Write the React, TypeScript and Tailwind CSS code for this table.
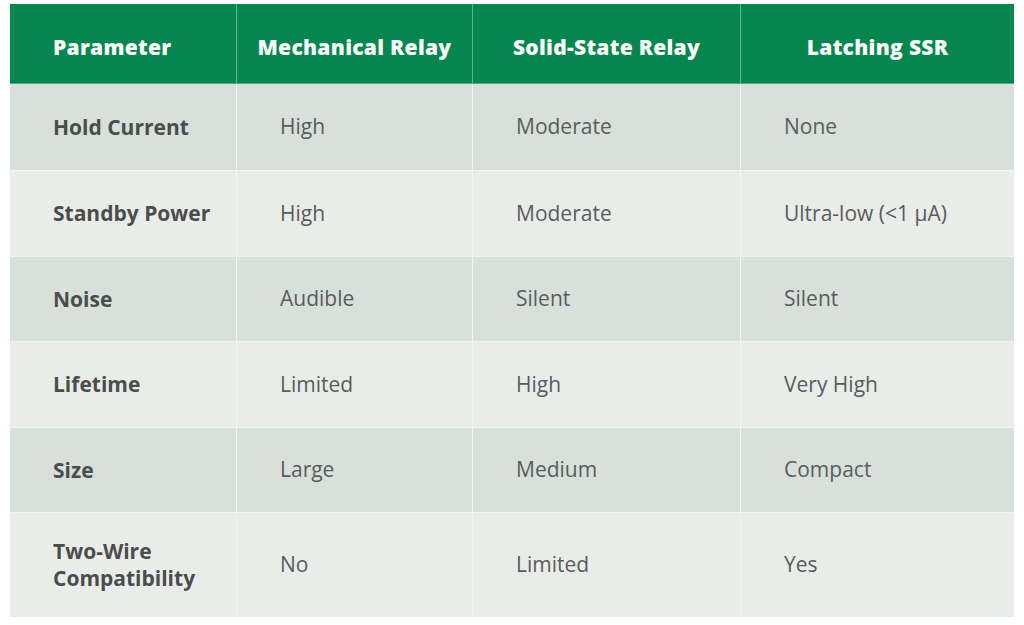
import React from "react";

const headers = ["Parameter", "Mechanical Relay", "Solid-State Relay", "Latching SSR"];
const rows: { label: React.ReactNode; vals: string[]; h: string }[] = [
  { label: "Hold Current", vals: ["High", "Moderate", "None"], h: "h-[86px]" },
  { label: "Standby Power", vals: ["High", "Moderate", "Ultra-low (<1 µA)"], h: "h-[86px]" },
  { label: "Noise", vals: ["Audible", "Silent", "Silent"], h: "h-[85px]" },
  { label: "Lifetime", vals: ["Limited", "High", "Very High"], h: "h-[86px]" },
  { label: "Size", vals: ["Large", "Medium", "Compact"], h: "h-[85px]" },
  {
    label: (
      <>
        Two-Wire
        <br />
        Compatibility
      </>
    ),
    vals: ["No", "Limited", "Yes"],
    h: "h-[105px]",
  },
];

export default function App() {
  return (
    <div className="w-[1024px] h-[625px] bg-white pt-[4px] pl-[10px]" style={{ fontFamily: '"Open Sans", sans-serif' }}>
      <div className="w-[1004px] grid grid-cols-[227px_236px_268px_273px]">
        {headers.map((h, i) => (
          <div
            key={h}
            className={`h-[80px] bg-[#05864f] flex items-center pt-[8px] text-white text-[21px] font-extrabold tracking-[0.3px] border-b border-[#4fae80] ${
              i === 0 ? "pl-[43px]" : "justify-center"
            } ${i < 3 ? "border-r border-r-[#5fb48a]" : ""}`}
          >
            {h}
          </div>
        ))}
        {rows.map((r, ri) => {
          const bg = ri % 2 === 0 ? "bg-[#d7e0da]" : "bg-[#e9edea]";
          const top = ri === 0 ? "" : "border-t border-t-[#f2f5f2]";
          return (
            <React.Fragment key={ri}>
              <div
                className={`${r.h} ${bg} ${top} border-r border-r-[#f2f5f2] flex items-center pl-[43px] text-[21px] font-bold leading-[27px] text-[#4a4d4b]`}
              >
                <span>{r.label}</span>
              </div>
              {r.vals.map((v, vi) => (
                <div
                  key={vi}
                  className={`${r.h} ${bg} ${top} ${vi < 2 ? "border-r border-r-[#f2f5f2]" : ""} flex items-center pl-[43px] text-[21px] text-[#5a5c5b]`}
                >
                  {v}
                </div>
              ))}
            </React.Fragment>
          );
        })}
      </div>
    </div>
  );
}
